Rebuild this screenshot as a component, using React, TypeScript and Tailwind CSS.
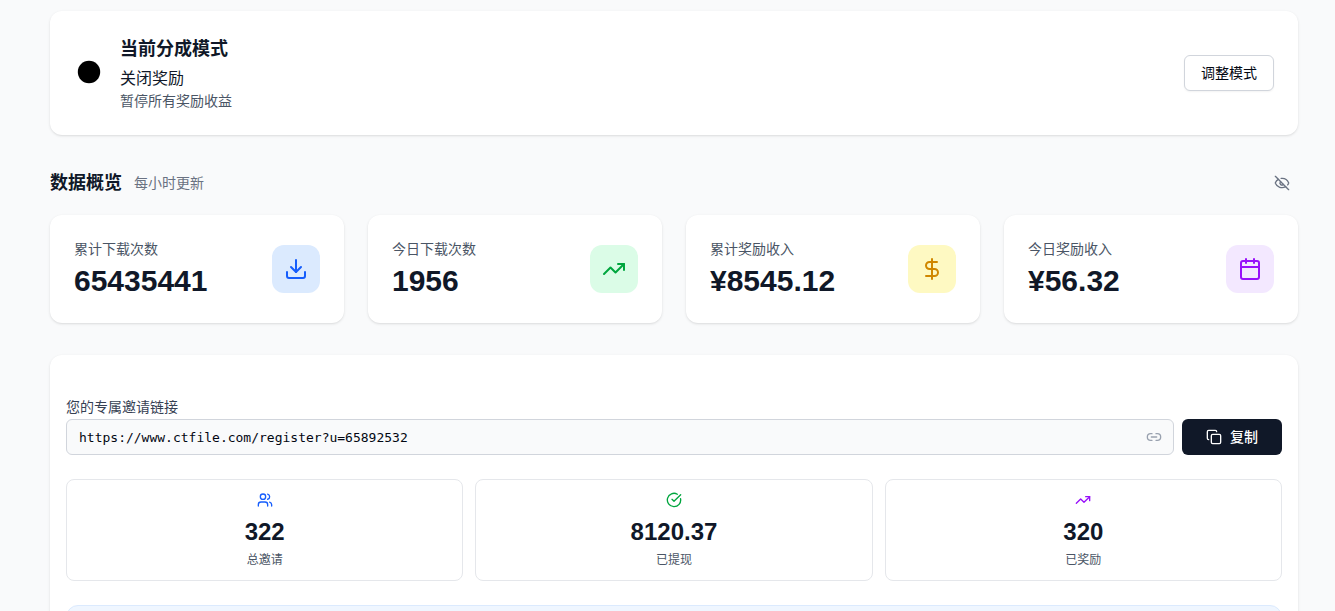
import {
  Calendar,
  CircleCheckBig,
  Copy,
  DollarSign,
  Download,
  EyeOff,
  Link2,
  TrendingUp,
  Users,
} from 'lucide-react';

const stats = [
  { label: '累计下载次数', value: '65435441', icon: Download, color: 'bg-blue-100 text-blue-600' },
  { label: '今日下载次数', value: '1956', icon: TrendingUp, color: 'bg-green-100 text-green-600' },
  { label: '累计奖励收入', value: '¥8545.12', icon: DollarSign, color: 'bg-yellow-100 text-yellow-600' },
  { label: '今日奖励收入', value: '¥56.32', icon: Calendar, color: 'bg-purple-100 text-purple-600' },
];

const inviteStats = [
  { label: '总邀请', value: '322', icon: Users, color: 'text-blue-600' },
  { label: '已提现', value: '8120.37', icon: CircleCheckBig, color: 'text-green-600' },
  { label: '已奖励', value: '320', icon: TrendingUp, color: 'text-purple-600' },
];

function ModeCard() {
  return (
    <section className="flex items-center justify-between rounded-xl bg-white p-6 shadow-sm">
      <div className="flex items-center gap-4">
        <svg className="h-[30px] w-[30px]" viewBox="0 0 30 30" aria-hidden="true">
          <circle cx="15" cy="14" r="11.2" fill="#000" />
        </svg>
        <div>
          <h2 className="text-lg font-bold text-gray-900">当前分成模式</h2>
          <p className="mt-1 text-base text-gray-900">关闭奖励</p>
          <p className="text-sm text-gray-600">暂停所有奖励收益</p>
        </div>
      </div>
      <button
        type="button"
        className="h-9 rounded-md border border-gray-300 bg-white px-4 text-sm text-gray-950 shadow-xs"
      >
        调整模式
      </button>
    </section>
  );
}

function Overview() {
  return (
    <section>
      <div className="mb-4 flex items-center justify-between">
        <div className="flex items-center gap-3">
          <h2 className="text-lg font-bold text-gray-900">数据概览</h2>
          <span className="text-sm text-gray-500">每小时更新</span>
        </div>
        <button
          type="button"
          aria-label="隐藏数据"
          className="flex h-8 w-8 items-center justify-center rounded-md text-gray-500"
        >
          <EyeOff className="h-4 w-4" />
        </button>
      </div>
      <div className="grid grid-cols-2 gap-6 md:grid-cols-4">
        {stats.map(({ label, value, icon: Icon, color }) => (
          <div
            key={label}
            className="flex items-center justify-between rounded-xl bg-white p-6 shadow-sm"
          >
            <div>
              <p className="text-sm text-gray-600">{label}</p>
              <p className="mt-1 text-3xl font-bold text-gray-900">{value}</p>
            </div>
            <div className={`flex h-12 w-12 items-center justify-center rounded-xl ${color}`}>
              <Icon className="h-6 w-6" />
            </div>
          </div>
        ))}
      </div>
    </section>
  );
}

function InviteCard() {
  return (
    <section className="rounded-xl bg-white px-4 pt-10 pb-6 shadow-sm">
      <label htmlFor="invite-link" className="block text-sm leading-6 text-gray-700">
        您的专属邀请链接
      </label>
      <div className="flex gap-2">
        <div className="relative flex-1">
          <input
            id="invite-link"
            readOnly
            value="https://www.ctfile.com/register?u=65892532"
            className="h-9 w-full rounded-md border border-gray-300 bg-gray-50 pr-10 pl-3 font-['DejaVu_Sans_Mono','Noto_Sans_CJK_SC',monospace] text-[13px] text-gray-950 outline-none"
          />
          <Link2 className="absolute top-1/2 right-3 h-4 w-4 -translate-y-1/2 text-gray-400" />
        </div>
        <button
          type="button"
          className="flex h-9 items-center gap-2 rounded-md bg-gray-900 px-6 text-sm font-medium text-white"
        >
          <Copy className="h-4 w-4" />
          复制
        </button>
      </div>
      <div className="mt-6 grid grid-cols-3 gap-3">
        {inviteStats.map(({ label, value, icon: Icon, color }) => (
          <div key={label} className="rounded-lg border border-gray-200 p-3 text-center">
            <Icon className={`mx-auto mb-2 h-4 w-4 ${color}`} />
            <p className="text-2xl font-bold text-gray-900">{value}</p>
            <p className="mt-1 text-xs text-gray-600">{label}</p>
          </div>
        ))}
      </div>
      <div className="mt-6 min-h-24 rounded-xl border border-blue-100 bg-blue-50 p-4" />
    </section>
  );
}

export default function App() {
  return (
    <main className="h-screen overflow-hidden bg-gray-50 pt-[11px] pr-[37px] pl-[50px] font-['Liberation_Sans','Noto_Sans_CJK_SC',sans-serif]">
      <div className="flex flex-col gap-8">
        <ModeCard />
        <Overview />
        <InviteCard />
      </div>
    </main>
  );
}
